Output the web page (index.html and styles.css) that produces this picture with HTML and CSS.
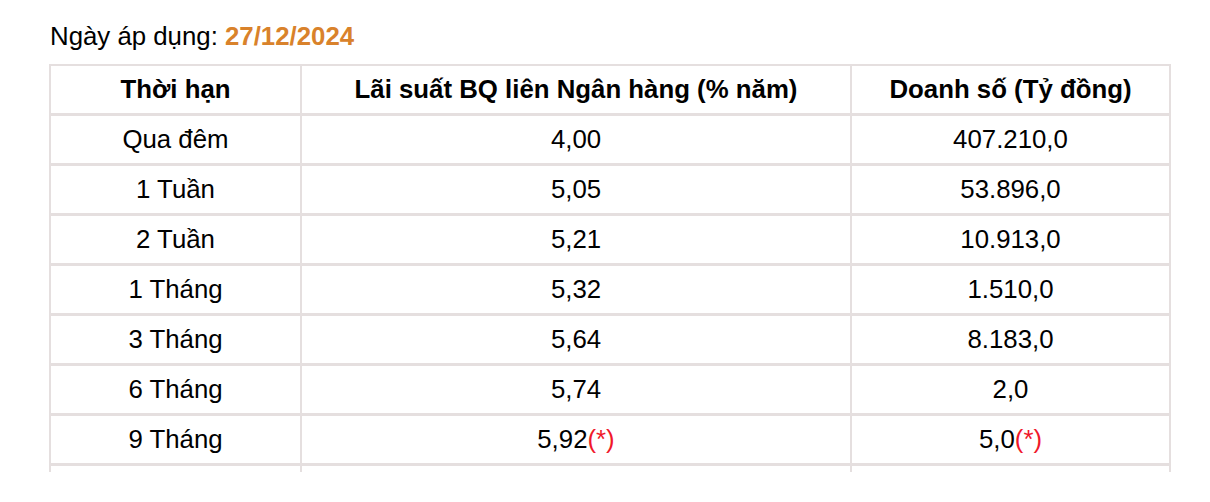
FILE: index.html
```html
<!DOCTYPE html>
<html lang="vi">
<head>
<meta charset="utf-8">
<title>Lãi suất liên ngân hàng</title>
<link rel="stylesheet" href="styles.css">
</head>
<body>
<div class="frame">
  <p class="date-line">Ngày áp dụng: <strong class="date">27/12/2024</strong></p>
  <table class="rates">
    <colgroup>
      <col class="c1"><col class="c2"><col class="c3">
    </colgroup>
    <thead>
      <tr><th>Thời hạn</th><th>Lãi suất BQ liên Ngân hàng (% năm)</th><th>Doanh số (Tỷ đồng)</th></tr>
    </thead>
    <tbody>
      <tr><td>Qua đêm</td><td>4,00</td><td>407.210,0</td></tr>
      <tr><td>1 Tuần</td><td>5,05</td><td>53.896,0</td></tr>
      <tr><td>2 Tuần</td><td>5,21</td><td>10.913,0</td></tr>
      <tr><td>1 Tháng</td><td>5,32</td><td>1.510,0</td></tr>
      <tr><td>3 Tháng</td><td>5,64</td><td>8.183,0</td></tr>
      <tr><td>6 Tháng</td><td>5,74</td><td>2,0</td></tr>
      <tr><td>9 Tháng</td><td>5,92<span class="note">(*)</span></td><td>5,0<span class="note">(*)</span></td></tr>
      <tr><td>&nbsp;</td><td>&nbsp;</td><td>&nbsp;</td></tr>
    </tbody>
  </table>
</div>
</body>
</html>
```

FILE: styles.css
```css
html, body {
  margin: 0;
  padding: 0;
  background: #ffffff;
}

body {
  font-family: "Liberation Sans", Arial, sans-serif;
  color: #000000;
}

.frame {
  height: 472px;
  overflow: hidden;
  padding-left: 49px;
  box-sizing: border-box;
}

.date-line {
  margin: 21px 0 13px 1px;
  font-size: 25.8px;
  line-height: 30px;
}

.date {
  color: #d9822b;
  font-weight: bold;
}

.rates {
  width: 1120px;
  border-collapse: separate;
  border-spacing: 0;
  border: 1px solid #e5dfdf;
  table-layout: fixed;
  font-size: 25.8px;
}

.c1 { width: 251px; }
.c2 { width: 550px; }
.c3 { width: 319px; }

.rates th,
.rates td {
  padding: 0;
  text-align: center;
  line-height: 47px;
  height: 47px;
  border-left: 1px solid #e5dfdf;
  border-right: 1px solid #e5dfdf;
  border-top: 1px solid #e5dfdf;
  border-bottom: 2px solid #e5dfdf;
  white-space: nowrap;
}

.rates th {
  font-weight: bold;
}

.note {
  color: #f0182a;
}
```
